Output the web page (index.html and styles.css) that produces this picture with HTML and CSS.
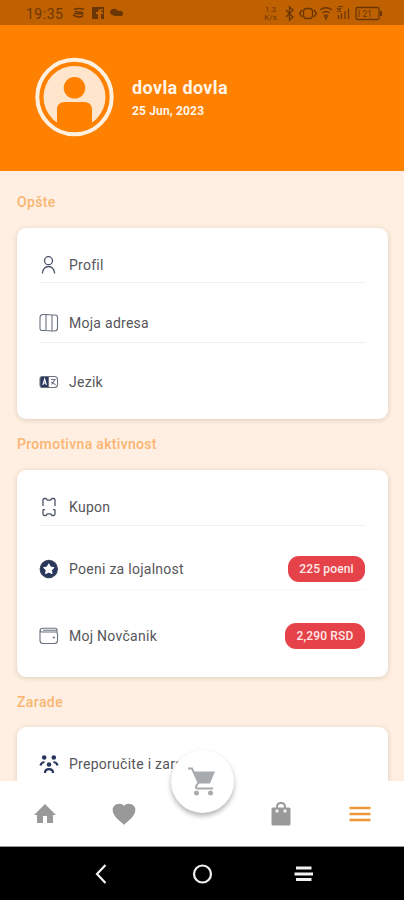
FILE: index.html
```html
<!DOCTYPE html>
<html lang="sr-Latn">
<head>
<meta charset="utf-8">
<title>Profil</title>
<link rel="stylesheet" href="styles.css">
</head>
<body>
<div class="screen">
  <div class="status">
    <span class="time">19:35</span>
    <svg class="notifications" width="54" height="14" viewBox="0 0 54 14">
      <path d="M2 3.500q5-2 10 0M3 5.500l7 1q2 1-1 1.500l-7-.5M1 9q5 3 9 1.500l1-2" fill="none" stroke="currentColor" stroke-width="1.500"/>
      <path fill="currentColor" fill-rule="evenodd" d="M20 1h12v12h-3V8h2V6h-2V4.500h2V3h-2q-3 0-3 3h-2v2h2v5h-6z"/>
      <path fill="currentColor" d="M40 9a3 3 0 0 1-1-5q4-3 7 1 5-1 5 3 0 2-3 2h-5z"/>
    </svg>
    <span class="speed"><span>1.3</span><span>K/s</span></span>
    <svg class="signals" width="102" height="18" viewBox="0 0 102 18" fill="none" stroke="currentColor" stroke-width="1.300">
      <path d="M3 6l7 7-3.500 3V3L10 6l-7 7"/>
      <rect x="20.500" y="4.500" width="9" height="10" rx="3"/><path d="M19 6L16.500 9.500 19 13M31 6l2.500 3.500L31 13"/>
      <path d="M37 6q6-4.500 12 0M39.500 9q3.500-3 7 0M41.500 11.500q1.500-1.200 3 0L43 15z"/>
      <path d="M55.500 15v-4M58.500 15V9.500M62 15V7M65.500 15V4.500M54 4l4 4M58 4l-4 4"/><path d="M55 2.500h5" stroke-width="1"/>
      <rect x="73" y="3.500" width="23" height="12" rx="1.500"/><path d="M98 7v5" stroke-width="2"/><path d="M76 6v7" stroke-width="1"/>
      <text x="79.500" y="12.500" class="battery">21</text>
    </svg>
  </div>

  <header class="header">
    <svg class="avatar" width="80" height="80" viewBox="0 0 80 80">
      <circle cx="39.500" cy="40" r="31" fill="#ffe5cb"/>
      <circle cx="39.500" cy="30.800" r="10.800" fill="#ff8101"/>
      <path d="M22 72V53q0-8 8-8h19q8 0 8 8v19z" fill="#ff8101"/>
      <circle cx="39.500" cy="40" r="37.200" fill="none" stroke="#fff0df" stroke-width="4"/>
    </svg>
    <div class="user">
      <div class="name">dovla dovla</div>
      <div class="date">25 Jun, 2023</div>
    </div>
  </header>

  <main class="content">
    <h2 class="title general">Opšte</h2>
    <section class="card card-general">
      <div class="row profile">
        <svg class="icon person" viewBox="0 0 20 20"><circle cx="9.500" cy="5.700" r="4"/><path d="M3.300 18.500q1-7 6.200-7t6.200 7"/></svg>
        <span class="label">Profil</span>
      </div>
      <div class="row address">
        <svg class="icon thin" viewBox="0 0 20 20"><path d="M7 1.500H4Q1 1.800 1 4.500v10.500q0 3 2.500 2.500L7 17.500l6 .5h2.500q3 0 3-3V4.500q0-2.500-2.500-2.500H13zM7 1.500v16M13 2V18"/></svg>
        <span class="label">Moja adresa</span>
      </div>
      <div class="row language">
        <svg class="icon thin" viewBox="0 0 20 20"><rect x="1.500" y="4.500" width="17" height="11" rx="3"/><path class="solid" d="M3.500 4.500H9.500v11H3.500Q1 15.500 1 13V7Q1 4.500 3.500 4.500z"/><path class="light" d="M3.800 13L5.600 7 7.400 13M4.300 11h2.600"/><path d="M12 7.500h4L12.500 12.500M12 10q2 0 4.500 3"/></svg>
        <span class="label">Jezik</span>
      </div>
    </section>

    <h2 class="title promo">Promotivna aktivnost</h2>
    <section class="card card-promo">
      <div class="row coupon">
        <svg class="icon person" viewBox="0 0 20 20"><path d="M4 7V3q0-1.500 1.500-1.500H7L8.500 3.200h3L13 1.500h1.500q1.500 0 1.500 1.500v4M4 12.500V17q0 1.500 1.500 1.500H7l1.500-1.700h3l1.500 1.700h1.500q1.500 0 1.500-1.500v-4.500M4 7v2M16 7v2M4 12.700h2M14 12.700h2"/></svg>
        <span class="label">Kupon</span>
      </div>
      <div class="row points">
        <svg class="icon" viewBox="0 0 20 20"><circle class="solid" cx="9.800" cy="10" r="8.500"/><path class="star" d="M9.800 4.800l1.700 3.200 3.500.6-2.500 2.600.5 3.500-3.200-1.600-3.200 1.600.5-3.500-2.500-2.600 3.500-.6z"/></svg>
        <span class="label">Poeni za lojalnost</span>
        <span class="badge badge-points">225 poeni</span>
      </div>
      <div class="row wallet">
        <svg class="icon thin" viewBox="0 0 20 20"><path d="M18 6V3.800Q18 2.300 16.500 2.300H4Q1 2.300 1 5v9.500q0 3 3 3h11.500q3 0 3-3V8q0-2-2-2H3.500Q1 6 1 4.500M4 4.200h14"/><circle class="solid" cx="14.800" cy="11.500" r=".5"/></svg>
        <span class="label">Moj Novčanik</span>
        <span class="badge badge-wallet">2,290 RSD</span>
      </div>
    </section>

    <h2 class="title earnings">Zarade</h2>
    <section class="card card-earnings">
      <div class="row refer">
        <svg class="icon" viewBox="0 0 20 20"><g class="solid" stroke="none"><circle cx="5.200" cy="3.500" r="2.300"/><circle cx="14.800" cy="3.500" r="2.300"/><circle cx="10" cy="10.500" r="2.300"/></g><path class="heavy" d="M1.500 11.500Q2 8.500 5.500 8M18.500 11.500Q18 8.500 14.500 8M6 19q0-3.800 4-3.800t4 3.800"/></svg>
        <span class="label">Preporučite i zaradite</span>
      </div>
    </section>
  </main>

  <nav class="tabs">
    <svg width="24" height="24" viewBox="0 0 24 24"><path d="M10 21v-7h4v7h6v-8h3L12 2 1 13h3v8z"/></svg>
    <svg width="26" height="26" viewBox="0 0 24 24"><path d="M12 21.350l-1.450-1.320C5.400 15.360 2 12.280 2 8.500 2 5.420 4.420 3 7.500 3c1.740 0 3.410.81 4.500 2.090C13.090 3.810 14.760 3 16.500 3 19.580 3 22 5.420 22 8.500c0 3.780-3.400 6.860-8.550 11.540z" stroke="#999" stroke-width="1"/></svg>
    <span></span>
    <svg width="24" height="26" viewBox="0 0 24 26"><path d="M4 6.500h16q1.500 0 1.500 1.500V23q0 1.500-1.500 1.500H4Q2.500 24.500 2.500 23V8Q2.500 6.500 4 6.500z"/><path d="M8 10V6q0-4 4-4t4 4v4" fill="none" stroke="#999" stroke-width="2"/><path d="M9.500 6q0-2.700 2.500-2.700T14.500 6z" fill="#fff"/><circle cx="8" cy="10" r="1.700" fill="#eee"/><circle cx="16" cy="10" r="1.700" fill="#eee"/></svg>
    <svg width="24" height="24" viewBox="0 0 24 24"><path d="M1.500 6h21M1.500 12h21M1.500 18h21" stroke="#ee9638" stroke-width="2.300"/></svg>
    <div class="cart">
      <svg width="32" height="32" viewBox="0 0 32 32" fill="none" stroke="#a8abae" stroke-width="2"><path d="M1 2.500h4l6.500 14-2.500 4q-.5 2 2 2h15"/><path d="M6 5.500h22l-5 12H12z" fill="#a8abae" stroke="none"/><circle cx="9.500" cy="27" r="2.500" fill="#a8abae" stroke="none"/><circle cx="23.500" cy="27" r="2.500" fill="#a8abae" stroke="none"/></svg>
    </div>
  </nav>

  <div class="system">
    <svg width="24" height="24" viewBox="0 0 24 24"><path d="M16.500 3L8 12l8.500 9"/></svg>
    <svg width="24" height="24" viewBox="0 0 24 24"><circle cx="12.500" cy="12" r="8.500"/></svg>
    <svg width="24" height="24" viewBox="0 0 24 24"><path d="M5 6H20.500M3.500 12h18.500M5 17.500H20.500" stroke-width="2.800"/></svg>
  </div>
</div>
</body>
</html>
```
FILE: styles.css
```css
* { box-sizing: border-box; }
body { margin: 0; font-family: Roboto, "Liberation Sans", sans-serif; background: #feefe2; }
.screen { width: 404px; height: 900px; overflow: hidden; display: flex; flex-direction: column; }

.status { flex: none; height: 25px; padding-left: 26px; display: flex; align-items: center; background: #bf6100; color: #6b3606; }
.time { width: 46px; font-size: 14px; letter-spacing: .5px; padding-top: 2px; }
.notifications { margin-top: 1px; }
.speed { margin-left: 137px; width: 15px; display: flex; flex-direction: column; font-size: 8px; line-height: 8px; text-align: center; padding-top: 2px; }
.signals { margin-left: 5px; margin-top: 1px; flex: none; }
.battery { font-size: 8.500px; fill: currentColor; stroke: none; }

.header { flex: none; height: 146px; padding: 32px 0 0 35px; display: flex; background: #ff8101; color: #fff4e8; }
.user { padding: 20px 0 0 17px; font-weight: 700; }
.name { font-size: 18px; line-height: 22px; letter-spacing: .38px; }
.date { font-size: 12px; line-height: 14px; margin-top: 5px; letter-spacing: .15px; }

.content { flex: none; height: 610px; padding: 0 17px; overflow: hidden; background: #feefe2; }
.title { margin: 0; font-size: 14px; font-weight: 500; line-height: 18px; color: #fab571; white-space: nowrap; }
.general { padding: 22px 0 17px; letter-spacing: .35px; }
.promo { padding: 16px 0 17px; letter-spacing: .32px; }
.earnings { padding: 16px 0 16px; letter-spacing: .4px; }
.card { width: 371px; padding: 0 22px; border-radius: 9px; background: #fff; box-shadow: 0 1px 5px rgba(110, 80, 50, .22); }
.card-general { height: 191px; }
.card-promo { height: 207px; }
.card-earnings { height: 207px; }

.row { display: flex; align-items: center; border-bottom: 1px solid #f1f1f3; color: #55555a; }
.profile { height: 55px; padding-top: 20px; }
.address { height: 60px; padding-top: 21px; }
.language { height: 58px; padding-top: 20px; border: 0; }
.coupon { height: 56px; padding-top: 19px; }
.points { height: 64px; padding-top: 23px; border-color: #f7f7f8; }
.wallet { height: 66px; padding-top: 26px; border: 0; }
.refer { height: 55px; padding-top: 19px; border: 0; }
.icon { flex: none; width: 20px; height: 20px; margin-right: 10px; fill: none; stroke: #37415a; stroke-width: 1.400; }
.person { stroke: #4b5368; stroke-width: 1.300; }
.thin { stroke: #6a7180; stroke-width: 1.100; }
.icon .solid { fill: #26365c; }
.icon .light { stroke: #fff; }
.icon .star { fill: #fff; stroke: #fff; stroke-width: 1; stroke-linejoin: round; }
.icon .heavy { stroke: #26365c; stroke-width: 2.200; }
.label { flex: 1; font-size: 14px; line-height: 18px; letter-spacing: .27px; white-space: nowrap; }
.badge { height: 26px; border-radius: 11px; background: #e54349; color: #ffe9e7; font-size: 12px; line-height: 26px; font-weight: 500; letter-spacing: .15px; text-align: center; margin-right: 1px; }
.badge-points { width: 77px; }
.badge-wallet { width: 80px; }

.tabs { flex: none; position: relative; height: 66px; padding: 0 5px 0 6px; display: grid; grid-template-columns: repeat(5, 1fr); align-items: center; justify-items: center; background: #fff; border-bottom: 1px solid #999; fill: #999; }
.cart { position: absolute; left: 171px; top: -31px; width: 63px; height: 63px; border-radius: 50%; background: #fff; box-shadow: 0 3px 5px rgba(0, 0, 0, .3); display: flex; align-items: center; justify-content: center; }
.system { flex: none; height: 53px; padding: 0 51px 0 50px; display: grid; grid-template-columns: repeat(3, 1fr); align-items: center; justify-items: center; background: #000; fill: none; stroke: #f2f2f2; stroke-width: 2.200; }
```
